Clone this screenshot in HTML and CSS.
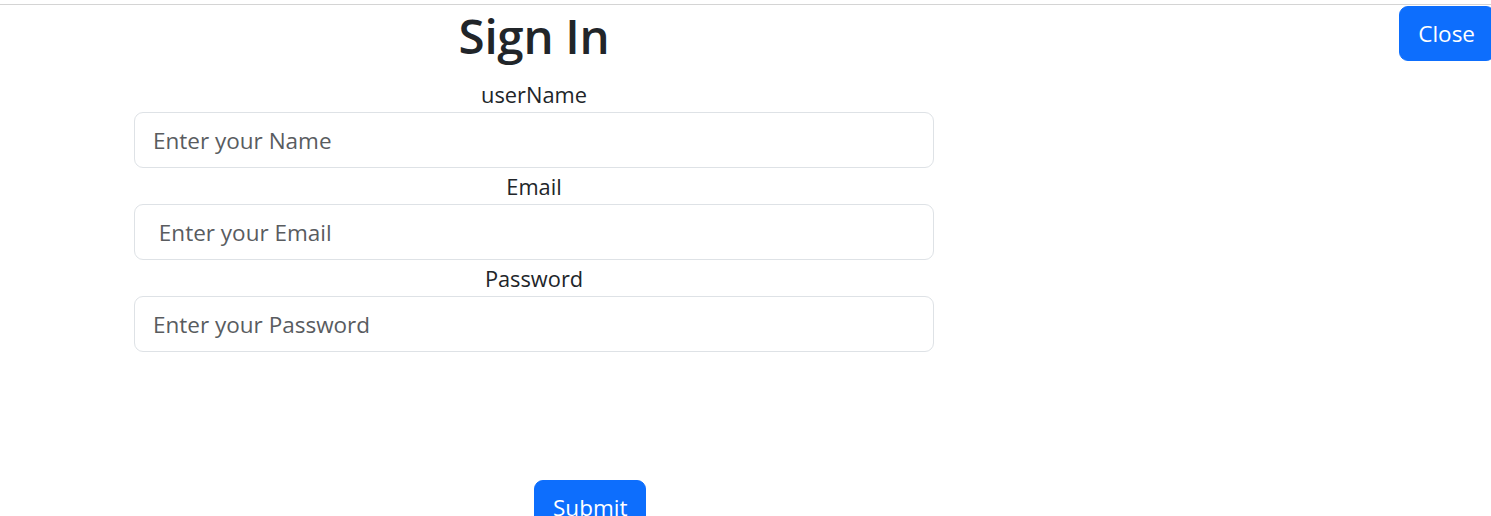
FILE: index.html
```html
<!DOCTYPE html>
<html lang="en">
<head>
<meta charset="utf-8">
<title>Sign In</title>
<link rel="stylesheet" href="styles.css">
</head>
<body>
<div class="page">
  <div class="row">
    <form class="signin">
      <h1 class="title">Sign In</h1>
      <div class="field">
        <label class="label" for="name">userName</label>
        <input class="input" id="name" type="text" placeholder="Enter your Name">
      </div>
      <div class="field">
        <label class="label" for="email">Email</label>
        <input class="input" id="email" type="email" placeholder=" Enter your Email">
      </div>
      <div class="field">
        <label class="label" for="pass">Password</label>
        <input class="input" id="pass" type="password" placeholder="Enter your Password">
      </div>
      <div class="actions">
        <button class="btn" type="button">Submit</button>
      </div>
    </form>
    <button class="btn btn-close" type="button">Close</button>
  </div>
</div>
</body>
</html>
```
FILE: styles.css
```css
html, body {
  margin: 0;
  padding: 0;
  background: #fff;
  overflow: hidden;
  height: 100%;
}
body {
  font-family: "Open Sans", "Noto Sans", sans-serif;
  color: #212529;
  font-size: 20px;
}
.page {
  margin-top: 4px;
  border-top: 1px solid #d4d4d4;
  height: 600px;
}
.row {
  display: flex;
  align-items: flex-start;
}
.signin {
  margin-left: 134px;
  width: 800px;
  display: flex;
  flex-direction: column;
}
.title {
  margin: 0 0 10px;
  font-size: 47.5px;
  font-weight: 600;
  line-height: 61px;
  text-align: center;
  letter-spacing: -0.3px;
}
.field {
  display: flex;
  flex-direction: column;
}
.label {
  text-align: center;
  font-size: 21.8px;
  line-height: 34px;
  padding-top: 2px;
}
.input {
  box-sizing: border-box;
  height: 56px;
  width: 100%;
  padding: 0 18px;
  border: 1px solid #dee2e6;
  border-radius: 9px;
  font-family: inherit;
  font-size: 22.5px;
  color: #212529;
  background: #fff;
  outline: none;
}
.input::placeholder {
  color: #595c5f;
}
.actions {
  margin-top: 128px;
  padding-left: 400px;
}
.btn {
  font-family: inherit;
  font-size: 22.5px;
  line-height: 31px;
  color: #fff;
  background: #0d6efd;
  border: 1px solid #0d6efd;
  border-radius: 9px;
  padding: 11px 18px;
  cursor: pointer;
}
.btn-close {
  margin-left: auto;
  margin-top: 1px;
  margin-right: -4px;
  padding: 11px 19px 11px 18px;
}
```
